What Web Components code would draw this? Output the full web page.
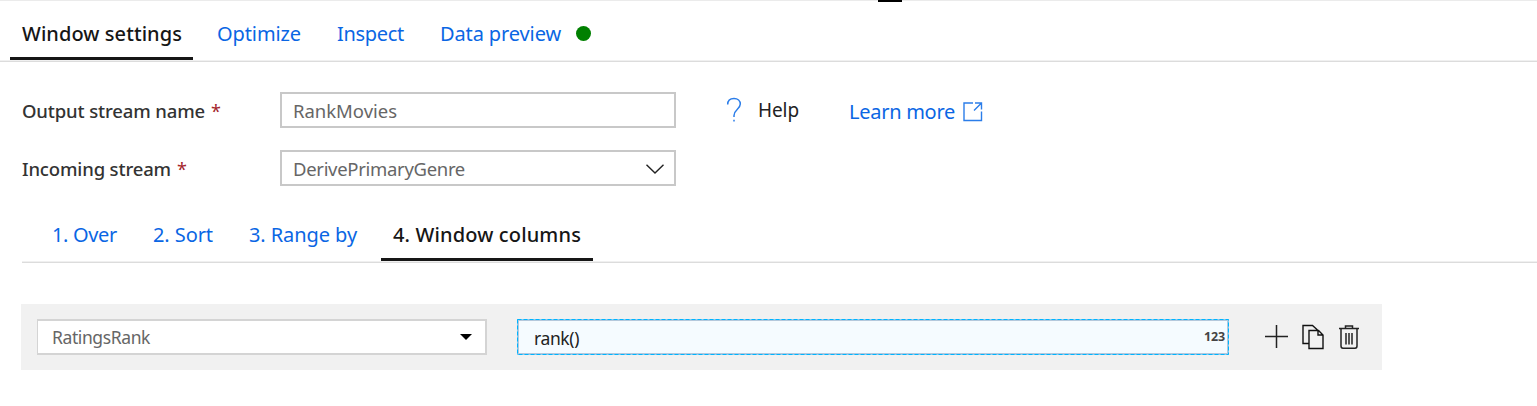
<!DOCTYPE html>
<html lang="en">
<head>
<meta charset="utf-8">
<title>Window settings</title>
<style>
body{margin:0;background:#fff;font-family:"Noto Sans","Open Sans",sans-serif;overflow:hidden}
</style>
</head>
<body>
<window-settings></window-settings>
<script>
const define=(name,html,after)=>{
  const t=document.createElement('template');t.innerHTML=html;
  customElements.define(name,class extends HTMLElement{
    connectedCallback(){
      if(this.shadowRoot)return;
      this.attachShadow({mode:'open'}).append(t.content.cloneNode(true));
      if(after)after.call(this,this.shadowRoot);
    }
  });
};

/* A single line of text tracked to a given width. */
define('ui-text',`<style>
:host{display:inline-block;white-space:pre;line-height:28px;flex:none}
</style><span><slot></slot></span>`,function(root){
  const s=root.querySelector('span'),w=+this.getAttribute('w');
  this.style.fontSize=this.getAttribute('size')+'px';
  const n=this.textContent.length;
  const gap=(w-s.getBoundingClientRect().width)/n;
  this.style.letterSpacing=gap.toFixed(3)+'px';
  this.style.width=w+'px';
});

define('ui-tab',`<style>
:host{display:block;box-sizing:border-box;flex:none;color:#0a66e4;height:100%;padding:var(--top,19px) 12px 0}
:host([active]){color:#161616;font-weight:500;border-bottom:3px solid #161616}
</style><slot></slot>`);

define('ui-tabs',`<style>
:host{display:block;border-bottom:1px solid #dcdcdc}
div{display:flex;height:var(--h,60px);border-bottom:1px solid #f0f0f0}
</style><div><slot></slot></div>`);

define('form-label',`<style>
:host{display:flex;box-sizing:border-box;width:258px;align-items:center;color:#333;font-weight:500;gap:6px;padding-top:2px}
b{color:#a4262c;font-weight:400;font-size:18px;line-height:28px}
</style><slot></slot><b>*</b>`);

define('form-box',`<style>
:host{display:flex;box-sizing:border-box;width:396px;height:36px;border:2px solid #c8c8c8;padding:2px 10px 0 11px;align-items:center;justify-content:space-between;color:#666;background:#fff}
</style><slot></slot>`);

define('column-row',`<style>
:host{display:flex;align-items:center;box-sizing:border-box;margin:41px 0 0 21px;width:1361px;height:66px;background:#f1f1f1;padding-left:16px}
.name,.expr{display:flex;box-sizing:border-box;height:36px;align-items:center;justify-content:space-between}
.name{width:450px;border:2px solid #d4d4d4;border-left-width:1px;background:#fff;color:#666;padding:0 13px 0 14px}
.expr{width:712px;margin-left:30px;background:#f5fbff;color:#222;padding:0 4px 0 17px;position:relative}
.expr svg{position:absolute;inset:0}
.num{color:#444;font-weight:700;font-family:"Open Sans","Noto Sans",sans-serif}
.icons{display:flex;margin-left:36px;gap:14px;align-items:center}
svg{display:block;flex:none}
</style>
<div class="name"><ui-text size="17.5" w="98">RatingsRank</ui-text><svg width="12" height="6"><path d="M0 0H12L6 6Z" fill="#000"/></svg></div>
<div class="expr"><svg width="712" height="36" fill="none"><rect x="1.5" y="1.5" width="709" height="33" stroke="#b4c8dc"/><rect x=".5" y=".5" width="711" height="35" stroke="#8fc9ec"/><rect x=".5" y=".5" width="711" height="35" stroke="#00b4ff" stroke-dasharray="4 2"/></svg><ui-text size="17.5" w="45" style="padding-top:2px">rank()</ui-text><ui-text class="num" size="12.5" w="21">123</ui-text></div>
<div class="icons">
<svg width="23" height="26" viewBox="0 0 23 26" fill="none" stroke="#222" stroke-width="1.5"><path d="M0 12.5H23M11.5 1V24"/></svg>
<svg width="22" height="26" viewBox="0 0 22 26" fill="none" stroke="#111" stroke-width="1.4"><path d="M6.5 19.5H1V1.5H10.5L15.5 6M7 6.5H16.5L21 11V24.5H7ZM16 6.5V11H21"/></svg>
<svg width="22" height="26" viewBox="0 0 22 26" fill="none" stroke="#222" stroke-width="1.5"><path d="M1 4.5H21M7.5 4V2H14.5V4M3 5V22Q3 24.2 5 24.2H17Q19 24.2 19 22V5M8 9V20.5M11 9V20.5M14 9V20.5"/></svg>
</div>`);

define('window-settings',`<style>
:host{display:block;width:1537px;height:406px;overflow:hidden;box-shadow:inset 0 1px #ebebeb}
.mark{width:24px;height:2px;margin-left:878px;background:#000}
.main{--h:58px;--top:18px}
.first{margin:0 12px 0 10px}
.row{display:flex;height:36px;margin:30px 0 0 22px}
.row+.row{margin-top:22px}
.help{display:flex;align-items:center;color:#222;margin-left:50px}
.help ui-text{margin-left:16px}
.more{display:flex;align-items:center;color:#0a66e4;margin-left:50px;padding-top:3px;gap:8px}
.sub{--h:60px;--top:20px;margin:15px 0 0 22px}
.dot{width:15px;height:15px;border-radius:50%;background:#008000;margin:24px 0 0 -9px}
svg{display:block;flex:none}
</style>
<div class="mark"></div>
<ui-tabs class="main">
<ui-tab active class="first" style="width:183px"><ui-text size="20" w="160">Window settings</ui-text></ui-tab>
<ui-tab style="width:120px"><ui-text size="20" w="84">Optimize</ui-text></ui-tab>
<ui-tab style="width:103px"><ui-text size="20" w="67">Inspect</ui-text></ui-tab>
<ui-tab style="width:157px"><ui-text size="20" w="121">Data preview</ui-text></ui-tab>
<div class="dot"></div>
</ui-tabs>
<div class="row"><form-label><ui-text size="18.5" w="183">Output stream name</ui-text></form-label>
<form-box><ui-text size="18.5" w="104">RankMovies</ui-text></form-box>
<div class="help"><svg width="16" height="26" viewBox="0 0 16 26" fill="none" stroke="#2b7de9" stroke-width="1.5"><path d="M1.7 7.5C1.7 3.5 4.3 1.5 8 1.5S14.3 3.7 14.3 7C14.3 12 8 12.5 8 18.5V20M8 22.7V24.5"/></svg><ui-text size="19" w="41">Help</ui-text></div>
<div class="more"><ui-text size="20" w="106">Learn more</ui-text><svg width="20" height="20" viewBox="0 0 20 20" fill="none" stroke="#2b7de9" stroke-width="1.4"><path d="M10 1H1V18.5H18.5V9.5M12 1H18.5V7.5M18.5 1L11 8.5"/></svg></div></div>
<div class="row"><form-label><ui-text size="18.5" w="149">Incoming stream</ui-text></form-label>
<form-box><ui-text size="18.5" w="172">DerivePrimaryGenre</ui-text><svg width="18" height="10" viewBox="0 0 18 10" fill="none" stroke="#222" stroke-width="1.4"><path d="M.5 .7L9 9L17.5 .7"/></svg></form-box></div>
<ui-tabs class="sub">
<ui-tab style="width:101px;margin-left:18px"><ui-text size="20" w="65">1. Over</ui-text></ui-tab>
<ui-tab style="width:96px"><ui-text size="20" w="60">2. Sort</ui-text></ui-tab>
<ui-tab style="width:144px"><ui-text size="20" w="108">3. Range by</ui-text></ui-tab>
<ui-tab active style="width:212px"><ui-text size="20" w="188">4. Window columns</ui-text></ui-tab>
</ui-tabs>
<column-row></column-row>`);
</script>
</body>
</html>
